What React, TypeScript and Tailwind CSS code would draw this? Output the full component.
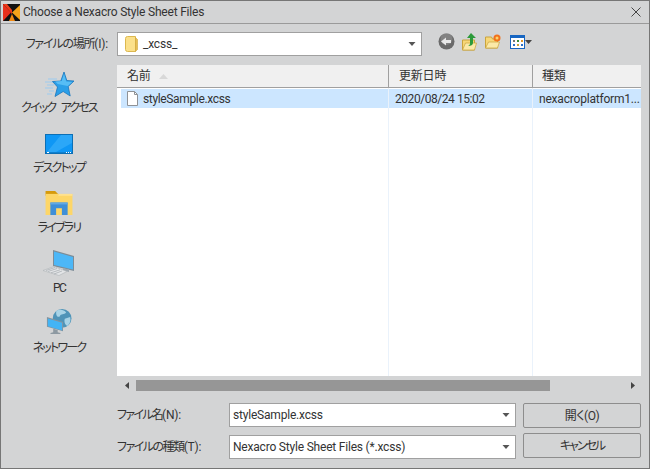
function Caret() {
  return <svg width="10" height="6" viewBox="0 0 10 6" className="shrink-0"><path d="M1.500 1h7L5 5z" fill="#555" /></svg>;
}
function FolderBig() {
  return (
    <svg width="13" height="17" viewBox="0 0 13 17">
      <path d="M.5 2.500Q.5.5 2.500.5h8v15h-8Q.5 15.500.5 13.500z" fill="#fbe08a" stroke="#dcb84f" />
      <path d="M10.500 1.500l2 2v10l-2 2z" fill="#e6bd55" stroke="#d0a83e" strokeWidth=".6" />
    </svg>
  );
}
function Star() {
  return (
    <svg width="30" height="26" viewBox="0 0 30 26">
      <path d="M4 7h9M1 10h10M3 13h7M1 16h8M5 19h5M3 22h5" stroke="#9ccbef" strokeWidth="1" />
      <path d="M20 0l2.800 8.500 7.200.5-5.800 5.500 2 9.500-7-4.500-8.200 5 2.500-9.500-5-5.500 8.300-.5z" fill="#2b9fe8" stroke="#1976bd" strokeWidth=".8" />
      <path d="M20 2l2.200 7.500 6 .5-4.500 4-10-2-2.500-2.500 6.500-.5z" fill="#57bdf5" />
    </svg>
  );
}
function Desktop() {
  return (
    <svg width="28" height="20" viewBox="0 0 28 20">
      <rect x=".5" y=".5" width="27" height="19" fill="#0f97f5" stroke="#0c6fb5" />
      <path d="M16 1h11v8L11 18H2z" fill="#37aefa" opacity=".7" />
      <rect x="1" y="18" width="26" height="1" fill="#0d80d0" />
      <path d="M2 18.500h2M21 18.500h1M23 18.500h1M25 18.500h1" stroke="#fff" />
    </svg>
  );
}
function Library() {
  return (
    <svg width="28" height="24" viewBox="0 0 28 25">
      <path d="M0 0h10l3 3h-1v2H0z" fill="#d69a0b" />
      <path d="M0 3h28v22H0z" fill="#fdd668" />
      <path d="M0 5h13l1-2h14v2z" fill="#ffe290" />
      <path d="M5 12h18v13h-6v-7h-6v7H5z" fill="#3f8fd8" />
      <path d="M5 12h18v2H5z" fill="#62a9e4" />
    </svg>
  );
}
function PC() {
  return (
    <svg width="32" height="26" viewBox="0 0 32 26">
      <path d="M10 0l21 6v15l-21-5z" fill="#7d8c97" />
      <path d="M11 1.500l19 5.500v12.500L11 15z" fill="#4cb7f7" />
      <path d="M20 18l6 1.500v2.500L20 20.500z" fill="#9fa8af" />
      <path d="M0 20.500l11-4 13 5-8 4z" fill="#e3e5e7" stroke="#aeb3b7" strokeWidth=".6" />
      <path d="M3 20.500l9-3M5 21.500l9-3M8 22.800l9-3M11 24l8-3" stroke="#a4a9ae" strokeWidth=".7" />
    </svg>
  );
}
function Network() {
  return (
    <svg width="28" height="25" viewBox="0 0 29 28">
      <circle cx="18" cy="10.500" r="10.500" fill="#4f94b8" />
      <path d="M11.500 2c4-2 9-1 11 2-2 3-6 1-7 4-2 2-5 0-4-6zM21 11l6-2c1 4 0 7-3 10-3-1-4-5-3-8z" fill="#a8d3e6" />
      <path d="M1 9l18 5.500V25L1 20z" fill="#84939d" />
      <path d="M2 10.500l16 5v8.500L2 19.300z" fill="#43b4f5" />
      <path d="M8 22l5 1.500V26l3 1v1H5v-1l3-1z" fill="#8d99a2" />
    </svg>
  );
}
function Side({ icon, label, h, gap }: { icon: React.ReactNode; label: string; h: string; gap: string }) {
  return (
    <div className={"flex flex-col items-center justify-end " + h}>
      {icon}
      <span className={"h-[16px] leading-[16px] whitespace-nowrap tracking-[-1.8px] [word-spacing:4px] " + gap}>{label}</span>
    </div>
  );
}
function Combo({ text }: { text: string }) {
  return (
    <div className="flex items-center justify-between w-[287px] h-[24px] bg-white border border-[#a0a0a0] pl-[3px] pr-[4px] whitespace-nowrap">
      <span>{text}</span>
      <Caret />
    </div>
  );
}
function Btn({ text, cls }: { text: string; cls: string }) {
  return (
    <div className={"flex items-center justify-center w-[118px] h-[25px] border border-[#8d8d8d] rounded-[2px] " + cls}>{text}</div>
  );
}
export default function App() {
  return (
    <div
      className="w-[650px] h-[469px] bg-[#d3d4d5] border border-[#767676] flex flex-col overflow-hidden text-[12px] text-[#333] tracking-[-0.2px] [font-feature-settings:'palt']"
      style={{ fontFamily: 'Roboto,"Noto Sans CJK JP",sans-serif' }}
    >
      <div className="flex items-center h-[23px] shrink-0 border-b border-[#9a9a9a] pl-[2px] pr-[8px]">
        <svg width="17" height="17" viewBox="0 0 17 17" className="mr-[3px]">
          <rect width="17" height="17" fill="#111" />
          <path d="M0 0l8 8.500L0 17z" fill="#e8301c" />
          <path d="M0 0h4l5 6 0 5-1-2.500z" fill="#ee3a1a" />
          <path d="M17 1L9 8.500 17 16z" fill="#f5a21a" />
          <path d="M6 17l3-7 3 7z" fill="#f08a14" />
        </svg>
        <span>Choose a Nexacro Style Sheet Files</span>
        <svg width="10" height="10" viewBox="0 0 10 10" className="ml-auto">
          <path d="M.5.500l9 9M9.500.500l-9 9" stroke="#444" strokeWidth="1" />
        </svg>
      </div>
      <div className="flex items-center h-[24px] mt-[8px] shrink-0">
        <span className="w-[116px] shrink-0 text-right pr-[9px] whitespace-nowrap">
          <span className="tracking-[-1.2px]">ファイルの場所</span>(I):
        </span>
        <div className="flex items-center justify-between w-[305px] h-[24px] bg-white border border-[#a0a0a0] pl-[7px] pr-[4px]">
          <div className="flex items-center gap-[5px]">
            <FolderBig />
            <span>_xcss_</span>
          </div>
          <Caret />
        </div>
        <div className="flex items-center ml-[16px] mb-[5px]">
          <svg width="17" height="17" viewBox="0 0 17 17">
            <circle cx="8.500" cy="8.500" r="8" fill="#6a6a6a" />
            <circle cx="8.500" cy="6" r="6" fill="#9a9a9a" opacity=".5" />
            <path d="M3 8.500L8 4.500v2.500h5v3H8v2.500z" fill="#e8e8e8" />
          </svg>
          <svg width="15" height="18" viewBox="0 0 15 18" className="ml-[7px]">
            <path d="M.5 7h12v10H.5z" fill="#f7d778" stroke="#c9a43c" />
            <path d="M.5 17l3-7h11l-2 7z" fill="#fbe9a8" stroke="#c9a43c" strokeWidth=".7" />
            <path d="M9 0l5 5h-3v5c0 2-2 3-5 3 2-1 2-2 2-3V5H5z" fill="#2c9a3a" />
          </svg>
          <svg width="16" height="15" viewBox="0 0 16 15" className="ml-[8px]">
            <path d="M.5 3h6l1 2h5v9H.5z" fill="#f7d778" stroke="#c9a43c" />
            <path d="M.5 14l3-6h11l-2 6z" fill="#fbe9a8" stroke="#c9a43c" strokeWidth=".7" />
            <circle cx="12" cy="4" r="3.500" fill="#f2711c" />
            <circle cx="12" cy="4" r="1.500" fill="#fbd36a" />
          </svg>
          <div className="flex items-center ml-[9px]">
            <svg width="15" height="14" viewBox="0 0 15 14">
              <rect x=".5" y=".5" width="14" height="13" fill="#fff" stroke="#1766c2" />
              <rect x="1" y="1" width="13" height="2" fill="#1766c2" />
              <path d="M3 5h2v2H3z" fill="#777" />
              <path d="M7 5h2v2H7z" fill="#3a8f3a" />
              <path d="M11 5h2v2h-2z" fill="#e0962a" />
              <path d="M3 9h2v2H3z" fill="#2a6fc8" />
              <path d="M7 9h2v2H7z" fill="#c9a43c" />
              <path d="M11 9h2v2h-2z" fill="#2a6fc8" />
            </svg>
            <svg width="7" height="4" viewBox="0 0 7 4"><path d="M0 0h7L3.500 4z" fill="#444" /></svg>
          </div>
        </div>
      </div>
      <div className="flex flex-1 min-h-0 mt-[9px]">
        <div className="w-[116px] shrink-0 flex flex-col">
          <Side h="h-[51px]" gap="mt-[2px]" icon={<Star />} label="クイック アクセス" />
          <Side h="h-[60px]" gap="mt-[6px]" icon={<Desktop />} label="デスクトップ" />
          <Side h="h-[60px]" gap="mt-[5px]" icon={<Library />} label="ライブラリ" />
          <Side h="h-[60px]" gap="mt-[4px]" icon={<PC />} label="PC" />
          <Side h="h-[60px]" gap="mt-[6px]" icon={<Network />} label="ネットワーク" />
        </div>
        <div className="w-[524px] flex flex-col">
          <div className="h-[311px] bg-white flex flex-col">
            <div className="flex h-[23px] shrink-0 bg-[#f0f0f0] border-b border-[#a0a0a0]">
              <div className="w-[272px] shrink-0 border-r border-[#a0a0a0] pl-[10px] flex items-center">
                <span>名前</span>
                <svg width="9" height="5" viewBox="0 0 9 5" className="ml-[8px]"><path d="M0 5l4.500-5L9 5z" fill="#d8d8d8" /></svg>
              </div>
              <div className="w-[144px] shrink-0 border-r border-[#a0a0a0] pl-[10px] flex items-center">更新日時</div>
              <div className="flex-1 pl-[9px] flex items-center">種類</div>
            </div>
            <div className="flex flex-1 min-h-0">
              <div className="w-[272px] shrink-0 border-r border-[#eaf2fb] pl-[4px] pt-[1px]">
                <div className="flex items-center h-[19px] bg-[#cce6ff] w-[267px] pl-[6px] gap-[5px]">
                  <svg width="11" height="15" viewBox="0 0 11 15">
                    <path d="M.5.500h7l3 3v11H.500z" fill="#fff" stroke="#8f9296" />
                    <path d="M7.500.500v3h3" fill="none" stroke="#8f9296" />
                  </svg>
                  <span className="tracking-[-0.35px]">styleSample.xcss</span>
                </div>
              </div>
              <div className="w-[144px] shrink-0 border-r border-[#eaf2fb] pt-[1px]">
                <div className="h-[19px] bg-[#cce6ff] pl-[6px] flex items-center tracking-[-0.45px]">2020/08/24 15:02</div>
              </div>
              <div className="flex-1 min-w-0 pt-[1px]">
                <div className="h-[19px] bg-[#cce6ff] pl-[6px] flex items-center whitespace-nowrap">nexacroplatform1...</div>
              </div>
            </div>
          </div>
          <div className="h-[16px] mt-px flex items-center">
            <div className="w-[19px] flex justify-center">
              <svg width="4" height="7" viewBox="0 0 4 7"><path d="M4 0v7L0 3.500z" fill="#444" /></svg>
            </div>
            <div className="w-[414px] h-[11px] bg-[#969696]" />
            <div className="flex-1 flex justify-end pr-[6px]">
              <svg width="4" height="7" viewBox="0 0 4 7"><path d="M0 0v7l4-3.500z" fill="#444" /></svg>
            </div>
          </div>
          <div className="flex mt-[10px]">
            <div className="w-[112px] shrink-0 flex flex-col">
              <span className="h-[24px] leading-[24px] whitespace-nowrap">
                <span className="tracking-[-1.7px]">ファイル名</span>(N):
              </span>
              <span className="h-[24px] leading-[24px] mt-[8px] whitespace-nowrap">
                <span className="tracking-[-1.5px]">ファイルの種類</span>(T):
              </span>
            </div>
            <div className="flex flex-col gap-[8px] shrink-0">
              <Combo text="styleSample.xcss" />
              <Combo text="Nexacro Style Sheet Files (*.xcss)" />
            </div>
            <div className="flex flex-col gap-[5px] ml-[7px] shrink-0">
              <Btn cls="tracking-[-0.5px]" text="開く(O)" />
              <Btn cls="tracking-[-2px]" text="キャンセル" />
            </div>
          </div>
        </div>
      </div>
    </div>
  );
}
